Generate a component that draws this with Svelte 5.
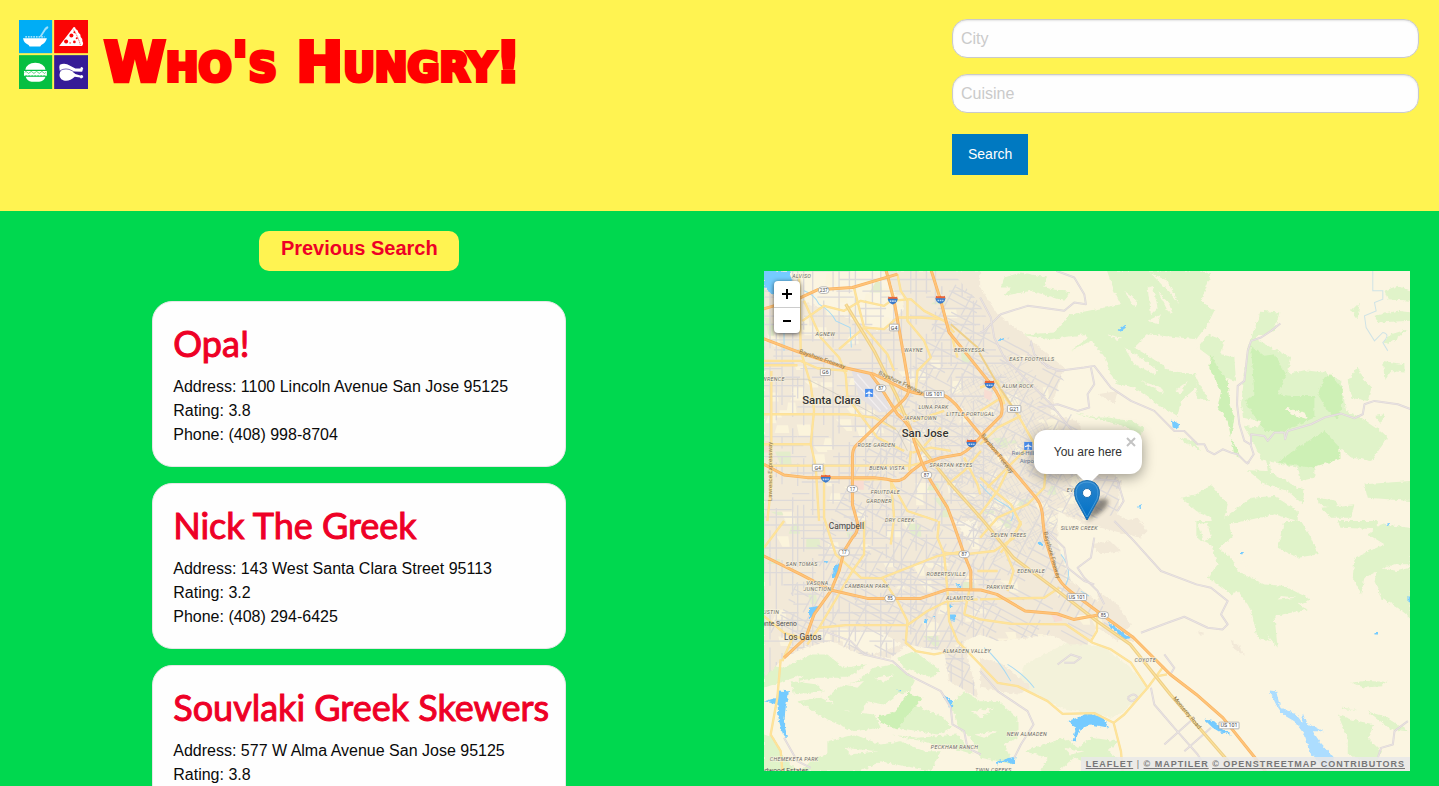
<script lang="ts">
  const restaurants = [
    { name: 'Opa!', address: '1100 Lincoln Avenue San Jose 95125', rating: '3.8', phone: '(408) 998-8704' },
    { name: 'Nick The Greek', address: '143 West Santa Clara Street 95113', rating: '3.2', phone: '(408) 294-6425' },
    { name: 'Souvlaki Greek Skewers', address: '577 W Alma Avenue San Jose 95125', rating: '3.8', phone: '' }
  ];

  // Small deterministic generator, so that the street grid is the same on every load.
  function random(seed: number) {
    let s = seed;
    return () => (s = (s * 16807) % 2147483647) / 2147483647;
  }

  // Broken grid lines over a box, to be rotated and clipped to the built-up area.
  function streets(w: number, h: number, step: number, seed: number) {
    const r = random(seed);
    let d = '';
    for (let x = 0; x < w; x += step * (0.6 + r() * 0.8)) {
      for (let y = 0; y < h; ) {
        const run = 20 + r() * 80;
        if (r() > 0.42) d += `M${Math.round(x)} ${Math.round(y)}v${Math.round(run)}`;
        y += run;
      }
    }
    for (let y = 0; y < h; y += step * (0.6 + r() * 0.8)) {
      for (let x = 0; x < w; ) {
        const run = 20 + r() * 80;
        if (r() > 0.42) d += `M${Math.round(x)} ${Math.round(y)}h${Math.round(run)}`;
        x += run;
      }
    }
    return d;
  }

  function blocks(w: number, h: number, count: number, seed: number) {
    const r = random(seed);
    let d = '';
    for (let i = 0; i < count; i++) {
      d += `M${Math.round(r() * w)} ${Math.round(r() * h)}h${Math.round(12 + r() * 34)}l4 ${Math.round(10 + r() * 30)}h-${Math.round(14 + r() * 30)}z`;
    }
    return d;
  }

  const westStreets = streets(660, 1200, 25, 41);
  const eastStreets = streets(900, 1300, 27, 97);
  const paleBlocks = blocks(1000, 1150, 150, 23);
  const parks = blocks(900, 1100, 26, 77);

  const highways = [
    'M-5 202L100 242 240 290 330 310 400 345Q440 368 480 370L530 370Q560 378 590 420L648 490 748 600 815 680Q836 705 836 750L842 800 875 905Q885 935 920 962L998 1020 1108 1100 1218 1210 1296 1270 1376 1340 1476 1465 1510 1510',
    'M500 -5L530 90 555 185 600 240 648 300 680 340Q725 395 710 435L660 485Q620 535 590 550L530 560 470 580Q440 600 420 622 400 635 370 625L330 620 130 620 60 612 0 580',
    'M365 -5L390 90 420 260 435 350Q435 370 420 385L275 525Q265 535 265 560V700L280 755Q285 780 265 800L240 840 225 900 200 960 150 1030 125 1100 60 1160',
    'M-5 115L100 85 160 57 265 50 400 10',
    'M-5 853L110 910 200 957 310 982 470 982 550 955 650 957 698 970 783 1020 878 1028 928 1045 1010 1030',
    'M320 310L350 350 400 430Q445 465 450 510L475 580 500 630 550 710 565 750 600 850 620 900V955'
  ];

  const mainRoads = [
    'M0 270H110L160 292 250 300', 'M0 430H250L330 440 395 475', 'M0 283H100', 'M105 10L110 240 140 340 150 420 140 520 155 585 165 750',
    'M22 300V640L10 750', 'M0 584H440L475 575', 'M120 90L170 200 225 260 245 310 250 380 340 500 420 540', 'M115 150L180 105 240 120 290 90 360 105 380 90 440 85 480 120 540 150 570 185',
    'M270 52L300 170 370 250 390 300', 'M225 235L300 170 360 175 400 140 470 140 530 145', 'M430 90V150L480 210 500 260 460 300 455 360', 'M400 10L410 60 430 90',
    'M0 520H140M180 585V740L215 850 290 920 350 922 520 855 600 840', 'M265 625H380L390 740 380 820', 'M300 750V850L265 900 230 960 165 1070 130 1120', 'M0 830L60 750',
    'M165 1070L245 1062H430L490 1020 550 990 640 985', 'M355 922L400 990 430 1050 425 1115 455 1140 510 1150 560 1140', 'M525 750L520 800 540 850 550 960 555 1050 580 1110 648 1180 700 1235 760 1245 850 1290 895 1328 990 1326 1048 1355 1070 1440 1075 1500',
    'M50 1165L40 1280 20 1390 50 1440 55 1500', 'M540 845L600 850 690 840 750 800 770 750', 'M648 1045L740 1058 905 1060 985 1115 1040 1135 1100 1175 1150 1250 1198 1185M1150 1250L1080 1330 1048 1355',
    'M648 985L840 980 885 950M999 1020L998 1080 980 1110', 'M648 620L690 660 740 700 770 760 710 845', 'M600 560L640 640 648 670M648 420L720 375 760 430 800 500 845 580 840 650 790 700 700 740 648 800',
    'M648 520L700 470 770 435M670 650L790 530M640 740L700 660 730 600', 'M550 640L600 600 650 540M380 630L430 720 520 750', 'M440 540L435 600M445 545L500 530 560 540', 'M648 350L700 330 720 400',
    'M0 1035L60 1085 120 1105', 'M55 1170L90 1090', 'M380 400L450 450 540 420M480 525L530 470M560 185L580 260', 'M720 830L748 900 730 960M640 900H700', 'M600 1030L648 1045M615 960L600 1030', 'M1208 1210L1180 1215'
  ];

  const countryRoads = [
    'M876 0L930 20 960 70 965 100 930 95 900 120 830 110 790 105 710 130 690 150 660 180 648 185',
    'M648 80L680 140 690 200 720 260 760 300 800 340 860 400 900 450 940 500', 'M790 250L880 300 960 290 990 285 1040 350 1100 390 1170 420 1230 480 1260 480 1300 520 1320 520 1330 540 1350 550 1375 535 1400 545 1420 550 1445 575 1455 575',
    'M980 290L990 340 970 370 975 410 940 420 880 400 820 410M800 210L810 250 850 290 900 300', 'M1548 158L1520 180 1490 200 1460 210 1450 240 1440 330 1420 345 1418 400 1425 460 1440 510 1458 520 1468 550 1448 580M1460 525V490L1500 495 1510 510 1530 485 1560 485 1562 505 1570 480 1640 460 1680 440 1730 428 1770 442 1795 430 1800 400 1830 390 1900 400 1940 415',
    'M1050 750L1100 800 1190 900 1296 940 1340 950 1390 990 1370 1030 1390 1060 1375 1075 1330 1070 1260 1037 1210 1055 1130 1085', 'M990 800L980 860 940 890 960 920 1000 960 1020 1000', 'M848 780L900 830 910 890 960 930 990 940',
    'M180 1080L260 1110 300 1150 385 1170 430 1210 530 1260 560 1310 565 1360 600 1380 610 1430 650 1450', 'M648 1200L700 1260 790 1320 808 1360 770 1420 750 1460', 'M1160 1250L1170 1300 1230 1370 1300 1450 1330 1500M1200 1420L1290 1340M1260 1440L1340 1370',
    'M880 1180L920 1150 950 1160 930 1175 900 1175M1090 1280Q1110 1260 1120 1280 1100 1300 1090 1280', 'M1930 1350L1890 1380 1885 1420 1850 1430 1840 1460M948 620L1060 630 1078 690 1060 720', 'M60 1400L100 1470 140 1490M1218 1210L1230 1190 1200 1150'
  ];

  const greens = [
    'M1028 0L1050 60 1070 100 920 130 900 150 870 185 770 192 860 205 960 190 990 220 1020 260 1040 310 1060 340 1110 350 1180 400 1240 435 1250 390 1296 350 1296 310 1220 300 1160 260 1110 230 1150 190 1296 205 1330 160 1350 120 1310 90 1340 10 1310 0z',
    'M720 20L770 5 850 20 840 50 920 65 900 90 800 60 720 75 740 50 710 50z',
    'M1490 120L1545 125 1530 180 1470 200 1520 230 1580 260 1570 310 1620 298 1680 305 1730 330 1745 420 1790 440 1850 480 1870 500 1820 570 1760 560 1725 530 1650 590 1650 620 1610 630 1600 590 1490 565 1470 520 1440 470 1430 400 1450 230z',
    'M1450 598L1510 600 1505 565H1515L1520 605 1600 650 1620 655 1615 700 1570 660 1500 640z',
    'M1300 230L1330 190 1380 210 1370 250 1410 260 1415 330 1380 320 1340 260zM1296 320L1310 350 1335 390 1296 380z',
    'M1750 330L1780 285 1800 330 1820 350 1810 390 1760 380zM1856 270L1920 280 1920 305 1880 300 1860 330zM1860 60L1900 45 1940 60V90L1870 85zM1830 135L1900 120 1940 125V150L1840 155zM1860 215L1880 190 1930 175 1900 200 1870 220zM1760 120L1785 95 1780 145zM1830 435L1860 430 1850 460z',
    'M1250 680L1296 670 1340 640 1390 700 1380 740 1460 680 1530 675 1600 720 1600 750 1530 730 1440 750 1395 760 1400 800 1360 830 1340 740 1296 720z',
    'M1296 750L1390 750 1405 800 1360 830 1400 860 1420 900 1440 910 1500 940 1560 945 1640 985 1600 1000 1630 1015 1530 1035 1540 1130 1500 1080 1520 1110 1480 1100 1460 1020 1450 1000 1420 960 1400 970 1330 920 1360 880 1340 820 1296 800z',
    'M1560 750H1610L1640 800 1660 850 1600 860 1540 830zM1720 750H1840V775L1730 770zM1810 790L1850 760 1938 770V880H1890L1860 890 1800 920 1790 970 1765 920 1770 860 1860 820zM1840 890L1900 900 1938 890V1040L1900 1010 1850 980 1830 930zM1660 680L1720 690 1710 710 1670 705zM1670 710L1770 700 1760 740 1700 740zM1800 640L1938 630V690L1810 680z',
    'M1760 1235L1800 1230 1870 1232 1850 1245 1800 1250zM1730 1310L1780 1315 1740 1315zM1720 1330L1760 1345 1830 1360 1810 1400 1850 1440 1830 1480 1750 1450 1750 1400zM1810 1320L1860 1335 1930 1380 1880 1375z',
    'M920 240L990 205 960 170 1000 180zM920 425L1000 440 1030 440 1100 450 1140 470 1130 490 1060 460zM1240 500L1290 510 1310 540z',
    'M0 1180L60 1190 140 1150 190 1150 240 1190 310 1180 250 1220 160 1220 100 1230 120 1210 60 1230 0 1250z', 'M400 1160L450 1140 530 1200 500 1220 420 1190z',
    'M220 1250L280 1230 330 1190 390 1180 450 1220 440 1260 400 1270 360 1300 310 1290 290 1330 220 1310 190 1280zM100 1290L170 1280 250 1320 330 1330 350 1370 270 1380 200 1350z',
    'M190 1410L270 1390 350 1420 410 1410 480 1440 530 1440 500 1500 350 1470 290 1500 110 1500 150 1460 190 1450zM80 1230L160 1240 180 1260 90 1270zM430 1290L540 1340 560 1370 520 1390 400 1370z',
    'M560 1300L600 1260 648 1290 700 1290 760 1340 760 1400 720 1420 748 1480 650 1460 620 1400 590 1380zM830 1500L850 1460 780 1440 900 1400 940 1430 980 1400 1060 1410 1030 1440 1070 1470 1000 1490 930 1460 880 1500zM0 1390L30 1400 60 1460 100 1500H0z', 'M380 1390L460 1400 580 1390 630 1450 560 1430z'
  ];

  // Bare ridges that cut into the woods.
  const ridges = 'M1150 50L1165 45 1180 110 1160 130zM1180 60L1215 100 1225 130 1210 120zM1160 8L1210 30 1245 100 1220 70zM1080 60L1120 90 1110 110zM1030 190L1070 200 1060 210zM1080 230L1130 260 1180 300 1170 310 1110 280zM1200 280L1240 290 1230 300zM1150 150L1190 130 1180 160zM1130 330L1190 350 1200 370zM1230 360L1270 330 1250 370zM240 1240L300 1230 280 1250zM330 1220L390 1210 360 1235zM240 1430L340 1440 260 1450zM620 1320L690 1310 650 1340zM630 1390L700 1380 660 1400zM900 1430L960 1440 920 1450zM1300 760L1330 755 1340 800 1320 810zM1430 850L1460 870 1440 890zM1550 975L1600 980 1540 985zM1430 560L1470 585 1450 590zM1430 440L1490 450 1480 470 1440 465zM1560 410L1620 425 1630 445 1580 430z';

  const darkGreens = [
    'M1460 225L1500 255 1530 250 1565 310 1540 370 1580 375 1650 375V440L1560 480 1500 480 1440 390 1470 370z',
    'M1680 320L1700 310 1735 355 1732 410 1720 445 1690 420 1660 370z', 'M1340 250L1360 290 1390 330 1395 400 1410 440 1400 500 1430 560 1410 550 1390 450 1360 410 1370 360 1335 290z',
    'M1680 480L1725 530 1725 565 1640 590 1540 575 1600 530z', 'M340 1335L390 1325 430 1265 475 1280 430 1330 400 1375 350 1355z'
  ];

  const labels: [string, number, number][] = [
    ['ALVISO', 113, 23], ['AGNEW', 184, 195], ['WAYNE', 448, 244], ['BERRYESSA', 616, 242], ['LAWRENCE', 18, 331], ['LUNA PARK', 508, 413],
    ['JAPANTOWN', 467, 446], ['LITTLE PORTUGAL', 619, 436], ['ROSE GARDEN', 337, 528], ['BUENA VISTA', 369, 598], ['SPARTAN KEYES', 561, 588],
    ['FRUITDALE', 364, 670], ['GARDNER', 345, 697], ['DRY CREEK', 407, 752], ['EAST FOOTHILLS', 803, 269], ['ALUM ROCK', 761, 352],
    ['SAN TOMAS', 113, 886], ['VASONA', 160, 941], ['JUNCTION', 160, 959], ['CAMBRIAN PARK', 308, 952], ['ROBERTSVILLE', 546, 916],
    ['ALAMITOS', 587, 986], ['AUSTIN', 16, 1030], ['ALMADEN VALLEY', 608, 1145], ['PECKHAM RANCH', 571, 1434], ['CHEMEKETA PARK', 90, 1470],
    ['SEVEN TREES', 733, 797], ['SILVER CREEK', 945, 778], ['EDENVALE', 801, 907], ['PARKVIEW', 708, 955], ['COYOTE', 1143, 1173], ['NEW ALMADEN', 788, 1395],
    ['TWIN CREEKS', 688, 1503], ['EVERGREEN', 955, 662]
  ];

  const shields: [string, number, number][] = [
    ['237', 179, 58], ['87', 350, 352], ['87', 487, 612], ['17', 265, 654], ['17', 240, 845], ['85', 378, 982], ['87', 600, 850], ['85', 1017, 1032]
  ];
  const signs: [string, number, number, number][] = [
    ['G4', 390, 170, 28], ['G6', 184, 304, 30], ['G4', 161, 590, 32], ['US 101', 510, 370, 60], ['G21', 750, 414, 40], ['US 101', 938, 978, 58], ['US 101', 1394, 1363, 60]
  ];
  const interstates: [number, number][] = [[386, 88], [529, 86], [622, 517], [185, 622], [676, 340]];
</script>

<header class="top">
  <h1 class="brand">
    <svg class="tiles" viewBox="57 60 208 208" aria-hidden="true">
      <rect x="57" y="60" width="100" height="100" fill="#00adf5" />
      <rect x="163" y="60" width="102" height="100" fill="#fb0505" />
      <rect x="57" y="166" width="100" height="102" fill="#06bf41" />
      <rect x="163" y="166" width="102" height="102" fill="#351b97" />
      <g fill="#fff">
        <path d="M69 115H141Q138 129 124 135L121 140H89L86 135Q72 130 69 115z" />
        <path d="M76 111h58" stroke="#d5f3ff" stroke-width="4" stroke-dasharray="5 3" fill="none" />
        <path d="M119 110L135 84Q142 77 145 80T138 90L124 111z" fill="#9fe0fb" />
        <path d="M222 81Q227 80 228 87 236 90 236 98 244 103 243 111 250 116 248 124 253 132 247 138H178z" />
        <path d="M221 89Q235 110 242 135" fill="none" stroke="#fb0505" stroke-width="2" stroke-dasharray="4 2" />
        <g fill="#fb0505"><circle cx="215" cy="107" r="6" /><circle cx="199" cy="125" r="6" /><circle cx="224" cy="126" r="4" /><circle cx="224" cy="97" r="3" /><circle cx="231" cy="115" r="3" /><circle cx="211" cy="129" r="2" /></g>
        <path d="M76 210Q80 190 106 189 133 190 137 210zM72 214H141V228H72zM77 231H137Q132 245 118 246H95Q82 244 77 231z" />
        <path d="M74 218q4-6 8 0t8 0 8 0 8 0 8 0 8 0 8 0 8 0" fill="none" stroke="#06bf41" stroke-width="2" />
        <path d="M76 228h60" stroke="#06bf41" stroke-width="2" stroke-dasharray="6 3" />
        <path d="M180 195Q195 187 211 198L227 206H242Q244 199 249 203 253 208 248 211 251 215 246 216L224 215 207 222 180 214Q176 202 180 195z" />
        <path d="M181 216Q198 203 216 214L227 223 242 227Q247 224 250 229 253 233 247 235 243 238 241 233L225 231Q209 246 192 242 174 237 181 216z" />
      </g>
      <path d="M180 213Q199 202 217 213L228 220" fill="none" stroke="#351b97" stroke-width="2" />
    </svg>
    <span class="name">Who's Hungry!</span>
  </h1>

  <form class="search" onsubmit={(e) => e.preventDefault()}>
    <input type="text" placeholder="City" aria-label="City" />
    <input type="text" placeholder="Cuisine" aria-label="Cuisine" />
    <button type="submit">Search</button>
  </form>
</header>

<main class="content">
  <section class="results">
    <button class="previous" type="button">Previous Search</button>
    {#each restaurants as r}
      <article class="card">
        <h2>{r.name}</h2>
        <p>Address: {r.address}</p>
        <p>Rating: {r.rating}</p>
        {#if r.phone}<p>Phone: {r.phone}</p>{/if}
      </article>
    {/each}
  </section>

  <section class="map-column">
    <div class="map">
      <svg class="chart" viewBox="0 0 1938 1500" preserveAspectRatio="xMidYMid slice" aria-hidden="true">
        <defs>
          <clipPath id="city">
            <path d="M0 0H560L640 90 700 200 790 200 850 260 900 330 860 400 940 440 990 560 1070 630 1060 730 960 750 880 720 880 820 920 930 1010 1000 1120 1110 1060 1110 1000 1070 970 1120 918 1120 860 1090 700 1110 648 1090 600 1110 640 1280 555 1230 540 1140 430 1120 380 1160 290 1150 200 1110 120 1130 60 1160 0 1220z" />
          </clipPath>
          <filter id="rough" x="-5%" y="-5%" width="110%" height="110%">
            <feTurbulence type="fractalNoise" baseFrequency="0.09" numOctaves="2" seed="8" />
            <feDisplacementMap in="SourceGraphic" scale="13" xChannelSelector="R" yChannelSelector="G" />
          </filter>
        </defs>
        <rect width="1938" height="1500" fill="#fbf5e1" />

        <g filter="url(#rough)">
          {#each greens as d}<path {d} fill="#e0f3c9" />{/each}
          {#each darkGreens as d}<path {d} fill="#cdf0b5" />{/each}
          <path d={ridges} fill="#fbf5e1" />
          <path d="M920 1110L1020 1130 1090 1180 1150 1250 1080 1320 1040 1340 890 1310 760 1240 780 1180z" fill="#f3f2da" />
          <path d="M0 0H648V50L700 130 780 190 850 250 900 290 870 380 860 430 940 450 990 560 1070 630 1060 730 1150 780 1130 800 1010 770 960 760 880 720 880 820 920 930 1010 1000 1120 1110 1060 1110 1000 1070 970 1120 918 1120 860 1090 700 1110 648 1090 600 1110 640 1280 555 1230 540 1140 430 1120 380 1160 290 1150 200 1110 120 1130 60 1160 0 1220z" fill="#f2e9d8" />
          <path d="M648 1160L720 1180 800 1250 760 1270 648 1250zM980 820L1040 810 1070 840 1010 850zM1040 760L1120 740 1150 780 1080 790zM1000 960L1060 1000 1100 1060 1080 1080 1000 1020zM1000 370L1060 360 1050 400zM1296 1080L1320 1085 1310 1095zM1400 1105L1430 1130 1440 1155 1405 1130z" fill="#f2e9d8" />
          <path d="M60 0H360L420 120 340 180 200 120 80 80zM220 1080L350 1080 410 1120 330 1150 240 1120zM570 750H640V810L600 790z" fill="#fbf5e1" />
        </g>

        <g clip-path="url(#city)">
          <path d={paleBlocks} fill="#fbf4dc" />
          <path d={parks} fill="#e3edcb" />
          <g fill="none" stroke="#dedad9" stroke-width="4">
            <path d={westStreets} />
            <path d={eastStreets} transform="translate(640 -80) rotate(28)" />
            <path d={eastStreets} transform="translate(430 430) rotate(-30) scale(.4)" />
          </g>
          <path d="M660 355l25 10-5 25-20-10zM265 620h34v36h-26zM0 510h16v35H0zM860 1030h30l5 18-22 5z" fill="#f8dcd2" />
        </g>
        <path d="M262 298L325 312 385 420 345 425 285 380z" fill="#e5e1e2" />
        <path d="M280 310L370 415M270 330L350 420" stroke="#f3eff0" stroke-width="4" />

        <g filter="url(#rough)" fill="#75cbff">
          <path d="M0 0H75L85 30 60 70 20 70 0 45z" />
          <path d="M40 1258L75 1260 65 1310 60 1360 72 1400 60 1400 45 1350 40 1300 0 1290 38 1280zM135 1010L165 1005 160 1020 135 1045zM210 885L228 875 222 910 205 925z" />
          <path d="M910 1350L970 1328 1010 1335 1035 1370 980 1360 945 1375 935 1410 925 1410 935 1370zM700 1470L755 1455 750 1480 720 1470 695 1480zM530 1265L565 1290 562 1330 555 1300z" />
          <path d="M1030 1050L1055 1070 1100 1100 1080 1105 1040 1070zM1320 1345L1350 1350 1370 1370 1400 1390 1370 1385 1345 1370zM1060 180L1085 160 1085 170 1070 182zM1222 445L1245 460 1240 475 1225 470zM705 202l15-3-2 8h-14zM555 1030h18v18h-14zM480 1048l12-4-5 14zM505 1040l10-4v6zM573 940l15-2v15zM824 815h14l-2 10-12-2zM1430 843h8v7h-8zM1830 1083h9v7h-9zM1120 708l14-6-6 10zM180 870l16 1-6 8zM400 1254l12 4-8 3zM1862 760l12-4-2 8zM1932 975v20l6-4v-14zM555 1000h10v8h-10z" />
          <path d="M1515 1258L1535 1260 1548 1310 1590 1325 1614 1355 1615 1325 1625 1355 1675 1380 1645 1380 1665 1410 1710 1460 1690 1500 1640 1450 1620 1390 1590 1350 1555 1330 1535 1300z" fill="#acddff" />
        </g>
        <g fill="none" stroke="#a7daf4" stroke-width="3">
          <path d="M60 60V240M120 60Q150 70 165 100 200 120 215 150L258 170 262 230M648 640Q680 680 720 700T740 750M660 1130Q700 1160 740 1230M730 1180Q780 1210 810 1250" />
          <path d="M1825 0V60H1855V85L1830 95 1835 120 1800 135 1805 170 1830 210 1855 185Q1880 190 1855 215L1870 240" stroke="#cfe3e6" />
          <path d="M890 850Q930 900 900 950M950 960l25 15" />
        </g>

        <g fill="none" stroke-linejoin="round">
          {#each countryRoads as d}<path {d} stroke="#ddd6d5" stroke-width="6" /><path {d} stroke="#eee9e8" stroke-width="2" />{/each}
          {#each mainRoads as d}<path {d} stroke="#fadf98" stroke-width="7" /><path {d} stroke="#ffe49a" stroke-width="4" />{/each}
          <path d="M245 100L330 240 400 380 450 500 480 540 560 640 658 750 748 860 868 950 998 1050 1098 1120 1218 1270 1296 1360 1400 1480" stroke="#eed08a" stroke-width="10" />
          <path d="M245 100L330 240 400 380 450 500 480 540 560 640 658 750 748 860 868 950 998 1050 1098 1120 1218 1270 1296 1360 1400 1480" stroke="#ffe49b" stroke-width="3" />
          <path d="M560 160L640 230 648 250 700 340 760 430" stroke="#eed08a" stroke-width="6" />
          <path d="M50 325H130L200 360 330 430 400 480 430 540" stroke="#c9c5bd" stroke-width="2" />
          {#each highways as d}<path {d} stroke="#f9b461" stroke-width="9" /><path {d} stroke="#ffc47a" stroke-width="5" />{/each}
        </g>

        {#each shields as [t, x, y]}
          <rect x={x - 16} y={y - 10} width="32" height="20" rx="10" fill="#fff" stroke="#999" stroke-width="2" />
          <text class="route" {x} y={y + 5}>{t}</text>
        {/each}
        {#each signs as [t, x, y, w]}
          <rect x={x - w / 2} y={y - 10} width={w} height="20" rx="2" fill="#fff" stroke="#999" stroke-width="2" />
          <text class="route wide" {x} y={y + 6}>{t}</text>
        {/each}
        {#each interstates as [x, y]}
          <path d="M{x - 13} {y - 11}q6 3 13 0 7 3 13 0l2 8h-30z" fill="#e8653a" />
          <path d="M{x - 15} {y - 4}h30q-1 12-15 17-14-5-15-17z" fill="#3a79c9" />
          <path d="M{x - 9} {y + 3}h18" stroke="#bcd6f4" stroke-width="5" stroke-dasharray="5 2" />
        {/each}
        {#each [[315, 366], [792, 525]] as [x, y]}
          <rect x={x - 12} y={y - 12} width="24" height="24" fill="#4a8ff0" />
          <path d="M{x} {y - 9}l2 6 8 4v3l-8-2-1 5 3 2v2h-8v-2l3-2-1-5-8 2v-3l8-4z" fill="#fff" />
        {/each}

        {#each labels as [t, x, y]}<text class="area" {x} {y}>{t}</text>{/each}
        <text class="road" transform="translate(104 246) rotate(19)">Bayshore Freeway</text>
        <text class="road" transform="translate(342 310) rotate(25)">Bayshore Freeway</text>
        <text class="road" transform="translate(650 494) rotate(52)">Bayshore Freeway</text>
        <text class="road" transform="translate(838 784) rotate(74)">Bayshore Freeway</text>
        <text class="road" transform="translate(1225 1282) rotate(50)">Monterey Road</text>
        <text class="road" transform="translate(24 690) rotate(-90)">Lawrence Expressway</text>
        <text class="city" x="202" y="400">Santa Clara</text>
        <text class="city" x="483" y="499">San Jose</text>
        <text class="town" x="247" y="774">Campbell</text>
        <text class="town" x="116" y="1107">Los Gatos</text>
        <text class="village" x="36" y="1066">Monte Sereno</text>
        <text class="village" x="56" y="1504">Redwood Estates</text>
        <text class="airport" x="794" y="553">Reid-Hillview</text>
        <text class="airport" x="794" y="575">Airport</text>
      </svg>

      <div class="zoom">
        <button type="button" aria-label="Zoom in"><svg viewBox="0 0 12 12"><path d="M6 1v10M1 6h10" /></svg></button>
        <button type="button" aria-label="Zoom out"><svg viewBox="0 0 12 12"><path d="M2 6h8" /></svg></button>
      </div>

      <svg class="marker" viewBox="0 0 56 46" aria-hidden="true">
        <defs>
          <linearGradient id="pin" x1="0" y1="0" x2="0" y2="1"><stop offset="0" stop-color="#2a85cc" /><stop offset="1" stop-color="#0070c6" /></linearGradient>
          <filter id="soft" x="-30%" y="-30%" width="160%" height="160%"><feGaussianBlur stdDeviation="2" /></filter>
        </defs>
        <path d="M28 42L34 25Q42 17 49 21 50 27 41 34z" fill="#222" opacity=".5" filter="url(#soft)" />
        <path d="M28 41L17 21Q13 10 20 4 28-1 36 4 43 10 39 21z" fill="url(#pin)" stroke="#1f6fae" />
        <path d="M28 38L18 20Q15 10 21 5 28 1 35 5 41 10 38 20z" fill="none" stroke="#62aee2" stroke-width="1" opacity=".6" />
        <circle cx="28" cy="14" r="4.5" fill="#fff" stroke="#1f6fae" stroke-width="1" />
      </svg>

      <div class="popup">
        <p>You are here</p>
        <button type="button" aria-label="Close popup"><svg viewBox="0 0 10 10"><path d="M1 1l8 8M9 1l-8 8" /></svg></button>
      </div>

      <div class="credits"><a href="#leaflet">Leaflet</a> | <a href="#maptiler">© MapTiler</a> <a href="#osm">© OpenStreetMap contributors</a></div>
    </div>
  </section>
</main>

<style>
  :global(body) {
    background: #00d84f;
    color: #0a0a0a;
    font: 16px/24px "Liberation Sans", Arial, sans-serif;
    overflow: hidden;
  }
  :global(*) { box-sizing: border-box; }
  h1, h2, p { margin: 0; }
  button { font-family: inherit; cursor: pointer; }

  .top {
    display: flex;
    justify-content: space-between;
    align-items: flex-start;
    padding: 19px 20px 36px 19px;
    background: #fff351;
  }
  .brand { display: flex; align-items: flex-start; gap: 16px; padding-top: 1px; }
  .tiles { width: 69px; height: 69px; }
  .name {
    padding-top: 10px;
    color: #f00;
    font: bold small-caps 56px/64px "DejaVu Sans", sans-serif;
    -webkit-text-stroke: 4px #f00;
    white-space: nowrap;
  }
  .search { display: flex; flex-direction: column; align-items: flex-start; gap: 16px; width: 467px; }
  .search input {
    width: 100%;
    height: 39px;
    padding: 8px;
    border: 1px solid #cacaca;
    border-radius: 15px;
    background: #fefefe;
    box-shadow: inset 0 1px 2px rgba(10, 10, 10, 0.1);
    font: inherit;
  }
  .search input::placeholder { color: #cacaca; }
  .search button {
    margin-top: 5px;
    padding: 13px 16px;
    border: 0;
    background: #0079c1;
    color: #fefefe;
    font-size: 14px;
    line-height: 15px;
  }

  .content { display: grid; grid-template-columns: 1fr 1fr; }
  .results { display: flex; flex-direction: column; align-items: center; gap: 16px; padding: 20px 1px 20px 0; }
  .previous {
    width: 200px;
    height: 40px;
    margin-bottom: 14px;
    padding: 0 0 6px;
    border: 0;
    border-radius: 10px;
    background: #fff351;
    color: #ee0026;
    font-size: 20px;
    font-weight: bold;
  }
  .card {
    width: 414px;
    padding: 20px 20px 19px;
    border: 1px solid #e6e6e6;
    border-radius: 20px;
    background: #fefefe;
  }
  .card h2 {
    margin-bottom: 11px;
    color: #ee0026;
    font: 36px/42px Lato, sans-serif;
    -webkit-text-stroke: 1px #ee0026;
    white-space: nowrap;
  }

  .map-column { padding: 60px 29px 15px 44px; }
  .map { position: relative; height: 500px; overflow: hidden; background: #fbf5e1; }
  .chart { display: block; width: 100%; height: 100%; }
  .chart text { font-family: Roboto, sans-serif; text-anchor: middle; fill: #666; }
  .chart .area { font-size: 16px; font-style: italic; letter-spacing: 1px; stroke: #fbf5e1; stroke-width: 3px; paint-order: stroke; }
  .chart .road { font-size: 18px; text-anchor: start; fill: #8c784f; }
  .chart .route { font-size: 14px; fill: #444; }
  .chart .wide { font-size: 16px; }
  .chart .city { font-size: 34px; font-weight: 500; fill: #333; stroke: #fbf5e1; stroke-width: 3px; paint-order: stroke; }
  .chart .town { font-size: 25px; fill: #444; }
  .chart .village { font-size: 20px; fill: #555; }
  .chart .airport { font-size: 18px; fill: #6e7f9b; }

  .zoom {
    position: absolute;
    top: 10px;
    left: 10px;
    width: 26px;
    border-radius: 4px;
    background: #fff;
    box-shadow: 0 1px 5px rgba(0, 0, 0, 0.65);
  }
  .zoom button {
    display: grid;
    place-items: center;
    width: 26px;
    height: 26px;
    padding: 0;
    border: 0;
    background: none;
  }
  .zoom button + button { border-top: 1px solid #ccc; }
  .zoom svg { width: 12px; height: 12px; stroke: #000; stroke-width: 2; }

  .marker { position: absolute; z-index: 1; top: 208px; left: 50%; width: 56px; height: 46px; margin-left: -28px; }
  .popup {
    position: absolute;
    top: 159px;
    left: 50%;
    width: 108px;
    margin-left: -53px;
    padding: 12px 20px;
    border-radius: 12px;
    background: #fff;
    box-shadow: 0 3px 14px rgba(0, 0, 0, 0.4);
    color: #333;
    font-size: 12px;
    line-height: 20px;
    white-space: nowrap;
  }
  .popup::after {
    content: "";
    position: absolute;
    top: 100%;
    left: 50%;
    margin-left: -11px;
    border: 11px solid transparent;
    border-top-color: #fff;
    border-bottom: 0;
  }
  .popup button { position: absolute; top: 7px; right: 6px; width: 10px; height: 10px; padding: 0; border: 0; background: none; }
  .popup svg { display: block; stroke: #c3c3c3; stroke-width: 2; }

  .credits {
    position: absolute;
    right: 0;
    bottom: 0;
    padding: 0 5px;
    background: rgba(232, 232, 232, 0.85);
    color: #777;
    font-size: 9px;
    line-height: 14px;
    letter-spacing: 1px;
    text-transform: uppercase;
    white-space: nowrap;
  }
  .credits a { color: #777; font-weight: bold; text-decoration: underline; }
</style>
